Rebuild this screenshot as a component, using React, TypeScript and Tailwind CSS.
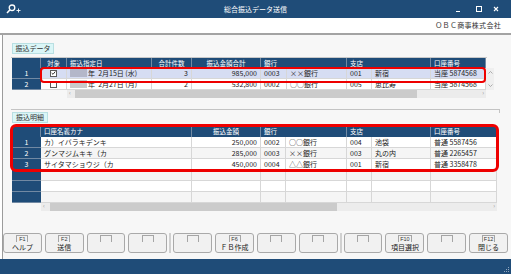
import React from 'react'

type Transfer = {
  checked: boolean
  date: string
  count: string
  amount: string
  bankCode: string
  bank: string
  branchCode: string
  branch: string
  account: string
}

type Detail = {
  kana: string
  amount: string
  bankCode: string
  bank: string
  branchCode: string
  branch: string
  account: string
}

const transfers: Transfer[] = [
  { checked: true, date: '年  2月15日 (水)', count: '3', amount: '985,000', bankCode: '0003', bank: '××銀行', branchCode: '001', branch: '新宿', account: '当座 5874568' },
  { checked: false, date: '年  2月27日 (月)', count: '2', amount: '532,800', bankCode: '0002', bank: '○○銀行', branchCode: '005', branch: '恵比寿', account: '当座 5874568' },
]

const details: (Detail | null)[] = [
  { kana: 'カ）イバラキデンキ', amount: '250,000', bankCode: '0002', bank: '○○銀行', branchCode: '004', branch: '池袋', account: '普通 5587456' },
  { kana: 'グンマジムキキ（カ', amount: '285,000', bankCode: '0003', bank: '××銀行', branchCode: '003', branch: '丸の内', account: '普通 2265457' },
  { kana: 'サイタマショウジ（カ', amount: '450,000', bankCode: '0004', bank: '△△銀行', branchCode: '001', branch: '新宿', account: '普通 3358478' },
  null,
  null,
  null,
]

const fkeys: { k?: string; label?: string }[][] = [
  [{ k: 'F1', label: 'ヘルプ' }, { k: 'F2', label: '送信' }, {}, {}],
  [{}, { k: 'F6', label: 'ＦＢ作成' }, {}, {}],
  [{}, { k: 'F10', label: '項目選択' }, {}, { k: 'F12', label: '閉じる' }],
]

const hd = 'h-[10px] border-r border-[#7189a3] leading-[10px] truncate'
const cell = 'border-r border-b border-[#d7d7d7] px-[3px] leading-[10px] truncate'

function Check({ on }: { on: boolean }) {
  return (
    <div className="flex h-[7px] w-[7px] items-center justify-center border border-[#5a5a5a] bg-white">
      {on && (
        <svg width="6" height="6" viewBox="0 0 6 6">
          <path d="M0.8 3 L2.4 4.6 L5.2 1.2" fill="none" stroke="#222" strokeWidth="1.1" />
        </svg>
      )}
    </div>
  )
}

function HScroll({ width, thumbStart, thumbWidth }: { width: number; thumbStart: number; thumbWidth: number }) {
  return (
    <div className="relative flex h-[8px] items-center bg-[#ececec]" style={{ width }}>
      <span className="absolute left-[2px] top-[-2px] text-[6px] leading-[10px] text-[#999]">‹</span>
      <div className="h-[8px] bg-[#cbcbcb]" style={{ marginLeft: thumbStart, width: thumbWidth }} />
      <span className="absolute right-[2px] top-[-2px] text-[6px] leading-[10px] text-[#999]">›</span>
    </div>
  )
}

function TransferTable() {
  return (
    <div className="relative">
      <div className="flex">
        <div className="w-[474px]">
          <div className="grid h-[10px] grid-cols-[29px_26px_85px_40px_69px_26px_60px_25px_59px_55px] bg-[#1f4c78] text-[6.5px] text-white">
            <div className={hd} />
            <div className={`${hd} text-center`}>対象</div>
            <div className={`${hd} pl-[3px]`}>振込指定日</div>
            <div className={`${hd} text-center`}>合計件数</div>
            <div className={`${hd} text-center`}>振込金額合計</div>
            <div className={`${hd} col-span-2 pl-[3px]`}>銀行</div>
            <div className={`${hd} col-span-2 pl-[3px]`}>支店</div>
            <div className={`${hd} pl-[3px]`}>口座番号</div>
          </div>
          {transfers.map((t, i) => (
            <div
              key={i}
              className={`grid h-[11px] grid-cols-[29px_26px_85px_40px_69px_26px_60px_25px_59px_55px] text-[7px] text-[#222] ${i === 0 ? 'bg-[#d6ddf3]' : 'bg-white'}`}
            >
              <div className="border-b border-[#7189a3] bg-[#1f4c78] text-center leading-[10px] text-white">{i + 1}</div>
              <div className={`${cell} flex items-center justify-center`}>
                <Check on={t.checked} />
              </div>
              <div className={`${cell} flex items-center`}>
                <span className={`mr-[1px] inline-block h-[8px] w-[17px] ${i === 0 ? 'bg-[#b4b7c9]' : 'bg-[#c9c9c9]'}`} />
                <span className="whitespace-pre">{t.date}</span>
              </div>
              <div className={`${cell} text-right`}>{t.count}</div>
              <div className={`${cell} text-right`}>{t.amount}</div>
              <div className={cell}>{t.bankCode}</div>
              <div className={cell}>{t.bank}</div>
              <div className={cell}>{t.branchCode}</div>
              <div className={cell}>{t.branch}</div>
              <div className={cell}>{t.account}</div>
            </div>
          ))}
        </div>
        <div className="w-[8px]">
          <div className="h-[10px]" />
          <div className="flex h-[22px] flex-col items-center justify-between bg-[#efefef] py-[3px]">
            <svg width="5" height="3" viewBox="0 0 5 3">
              <path d="M0.5 2.5 L2.5 0.5 L4.5 2.5" fill="none" stroke="#9a9a9a" strokeWidth="0.8" />
            </svg>
            <svg width="5" height="3" viewBox="0 0 5 3">
              <path d="M0.5 0.5 L2.5 2.5 L4.5 0.5" fill="none" stroke="#9a9a9a" strokeWidth="0.8" />
            </svg>
          </div>
        </div>
      </div>
      <div className="ml-[55px]">
        <HScroll width={419} thumbStart={8} thumbWidth={342} />
      </div>
      <div className="pointer-events-none absolute left-[28px] top-[9px] h-[16px] w-[446px] rounded-[4px] border-[2px] border-[#ee0000]" />
    </div>
  )
}

function DetailTable() {
  return (
    <div className="relative w-[485px]">
      <div className="grid h-[11px] grid-cols-[29px_151px_69px_25px_61px_25px_59px_66px] bg-[#1f4c78] text-[6.5px] text-white">
        <div className={`${hd} h-[11px] leading-[11px]`} />
        <div className={`${hd} h-[11px] pl-[3px] leading-[11px]`}>口座名義カナ</div>
        <div className={`${hd} h-[11px] text-center leading-[11px]`}>振込金額</div>
        <div className={`${hd} col-span-2 h-[11px] pl-[3px] leading-[11px]`}>銀行</div>
        <div className={`${hd} col-span-2 h-[11px] pl-[3px] leading-[11px]`}>支店</div>
        <div className="h-[11px] pl-[3px] leading-[11px]">口座番号</div>
      </div>
      {details.map((d, i) => (
        <div
          key={i}
          className={`grid h-[11px] grid-cols-[29px_151px_69px_25px_61px_25px_59px_66px] text-[7px] text-[#222] ${i % 2 === 0 ? 'bg-white' : 'bg-[#f5f5f5]'}`}
        >
          <div className="border-b border-[#7189a3] bg-[#1f4c78] text-center leading-[10px] text-white">{d ? i + 1 : ''}</div>
          <div className={cell}>{d?.kana}</div>
          <div className={`${cell} text-right`}>{d?.amount}</div>
          <div className={cell}>{d?.bankCode}</div>
          <div className={cell}>{d?.bank}</div>
          <div className={cell}>{d?.branchCode}</div>
          <div className={cell}>{d?.branch}</div>
          <div className={cell}>{d?.account}</div>
        </div>
      ))}
      <div className="ml-[29px]">
        <HScroll width={456} thumbStart={9} thumbWidth={287} />
      </div>
      <div className="pointer-events-none absolute left-[-2px] top-[-2px] h-[48px] w-[489px] rounded-[6px] border-[3px] border-[#ee0000]" />
    </div>
  )
}

function FKey({ k, label }: { k?: string; label?: string }) {
  return (
    <div className="flex h-[20px] flex-1 flex-col items-center rounded-[3px] border border-[#a9a9a9] bg-[#f1f1f1]">
      <div className="mt-[1px] h-[7px] min-w-[12px] border-x border-t border-[#a5a5a5] px-[1px] text-center font-['Liberation_Sans',sans-serif] text-[5.5px] leading-[7px] text-[#333]">
        {k}
      </div>
      <div className="text-[7px] leading-[10px] text-[#222]">{label}</div>
    </div>
  )
}

export default function App() {
  return (
    <div className="flex h-[274px] w-[511px] flex-col overflow-hidden bg-white font-['Noto_Sans_CJK_JP','Liberation_Sans',sans-serif]">
      {/* title bar */}
      <div className="grid h-[18px] grid-cols-[1fr_auto_1fr] items-center bg-[#1f4c78] text-white">
        <div className="flex items-center pl-[6px]">
          <svg width="16" height="10" viewBox="0 0 16 10">
            <circle cx="6" cy="3.8" r="2.8" fill="none" stroke="#fff" strokeWidth="1.3" />
            <path d="M4 5.8 L1 9" stroke="#fff" strokeWidth="1.5" />
            <path d="M10.5 6.5 H14.5 M12.5 4.5 V8.5" stroke="#fff" strokeWidth="0.9" />
          </svg>
        </div>
        <div className="text-[7px] leading-[18px]">総合振込データ送信</div>
        <div className="flex items-center justify-end pr-[8px]">
          <svg width="20" height="10" viewBox="0 0 20 10">
            <path d="M7 7.5 H11" stroke="#fff" strokeWidth="1" />
          </svg>
          <svg width="20" height="10" viewBox="0 0 20 10">
            <rect x="7.5" y="2.5" width="5" height="5" fill="none" stroke="#fff" strokeWidth="1" />
          </svg>
          <svg width="14" height="10" viewBox="0 0 14 10">
            <path d="M5 3 L9 7 M9 3 L5 7" stroke="#fff" strokeWidth="1.1" />
          </svg>
        </div>
      </div>

      {/* company */}
      <div className="flex h-[17px] items-center justify-end border-b-2 border-[#a3a3a3] pr-[10px] text-[7px] tracking-[0.3px] text-[#333]">
        ＯＢＣ商事株式会社
      </div>

      {/* content */}
      <div className="ml-[2px] flex flex-1 flex-col border-l border-[#9c9c9c] bg-[#f7f7f7] pr-[3px]">
        <div className="pl-[9px]">
          <div className="mt-[8px] h-[11px] w-[42px] border border-[#b9dfe2] bg-[#daf6f7] text-center text-[7px] leading-[9px] text-[#333]">
            振込データ
          </div>
          <div className="ml-[-1px] mt-[3px] h-px w-[476px] bg-[#c9c9c9]" />
          <TransferTable />
          <div className="ml-[-1px] mt-[11px] h-[4px] w-[489px] border-r border-t border-[#c4c4c4]" />
          <div className="mt-[-1px] h-[11px] w-[36px] border border-[#b9dfe2] bg-[#daf6f7] text-center text-[7px] leading-[9px] text-[#333]">
            振込明細
          </div>
          <div className="mt-[3px]">
            <DetailTable />
          </div>
        </div>

        {/* function keys */}
        <div className="mt-[22px] flex h-[20px]">
          {fkeys.map((group, gi) => (
            <React.Fragment key={gi}>
              {gi > 0 && (
                <div className="flex w-[6px] justify-center">
                  <div className="h-[20px] w-[2px] border-x border-[#d0d0d0] bg-white" />
                </div>
              )}
              <div className="flex flex-1 gap-[3px]">
                {group.map((f, fi) => (
                  <FKey key={fi} k={f.k} label={f.label} />
                ))}
              </div>
            </React.Fragment>
          ))}
        </div>
        <div className="h-[2px]" />
      </div>

      {/* status bar */}
      <div className="flex h-[15px] items-end justify-end bg-[#1f4c78] pb-[1px] pr-[1px]">
        <svg width="7" height="7" viewBox="0 0 7 7">
          <rect x="5" y="1" width="1" height="1" fill="#8fa5bd" />
          <rect x="3" y="3" width="1" height="1" fill="#8fa5bd" />
          <rect x="5" y="3" width="1" height="1" fill="#8fa5bd" />
          <rect x="1" y="5" width="1" height="1" fill="#8fa5bd" />
          <rect x="3" y="5" width="1" height="1" fill="#8fa5bd" />
          <rect x="5" y="5" width="1" height="1" fill="#8fa5bd" />
        </svg>
      </div>
    </div>
  )
}
